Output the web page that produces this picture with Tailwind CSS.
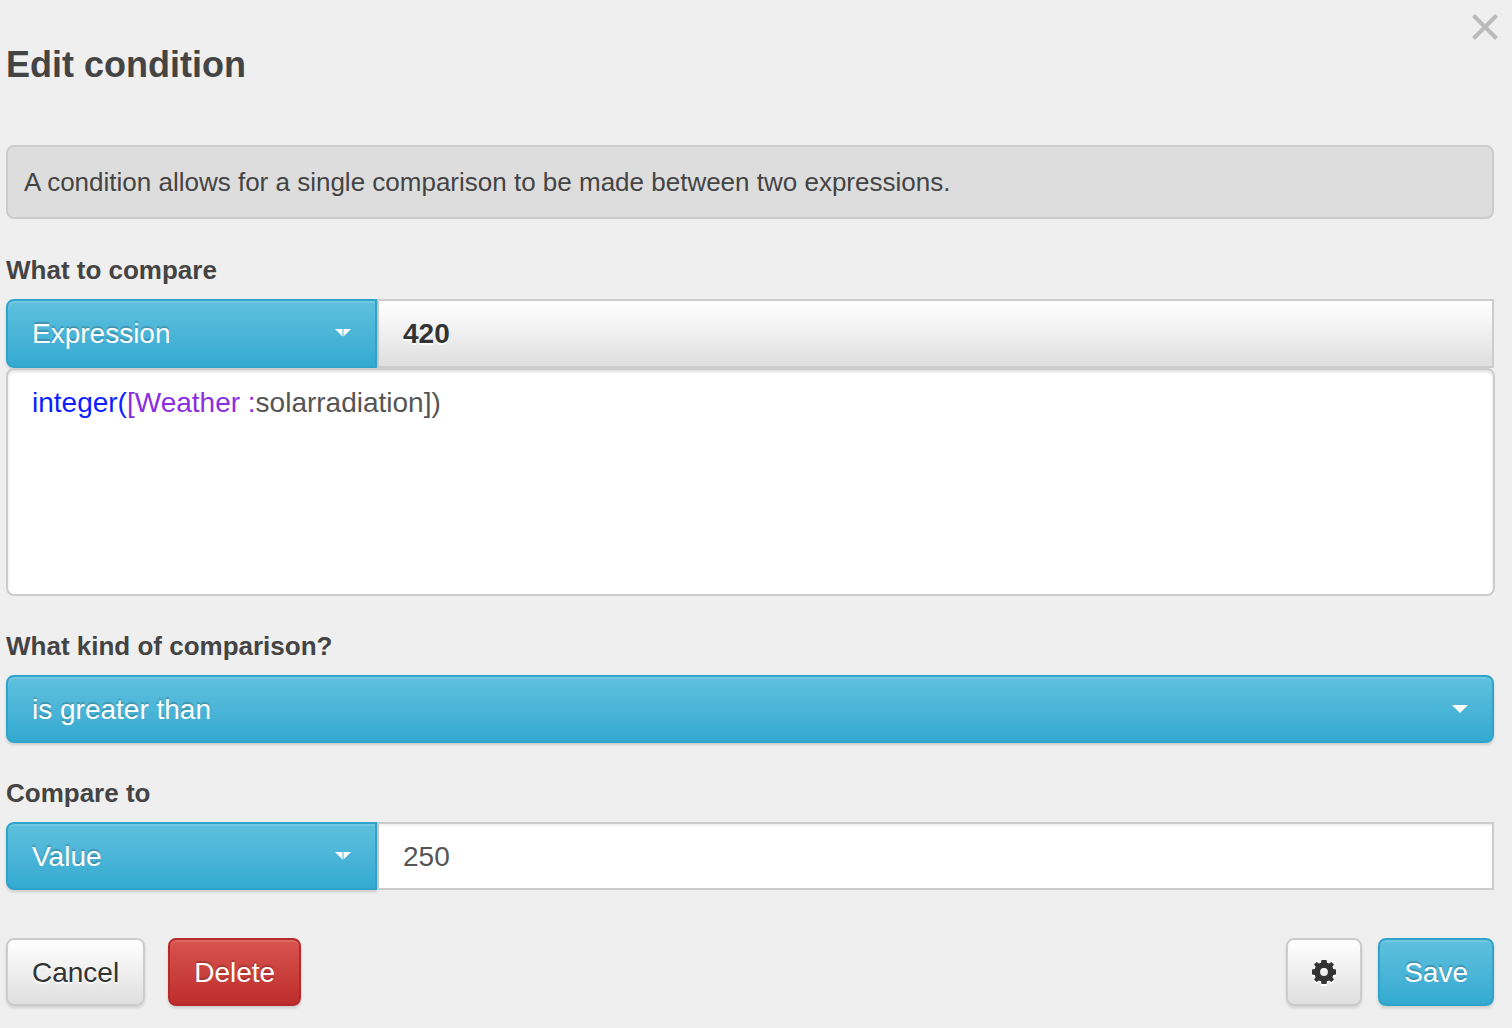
<!DOCTYPE html>
<html lang="en">
<head>
<meta charset="utf-8">
<meta name="viewport" content="width=device-width, initial-scale=1">
<title>Edit condition</title>
<script src="https://cdn.jsdelivr.net/npm/@tailwindcss/browser@4"></script>
</head>
<body class="min-h-screen bg-[#efefef] font-['Liberation_Sans',Arial,sans-serif] text-[#444]">
<main class="relative pt-[41px] pr-[18px] pb-[22px] pl-[6px]">
  <button type="button" aria-label="Close" class="absolute top-[13px] right-[13px] size-7 text-[#bbb]">
    <svg viewBox="0 0 28 28" class="size-7" fill="none" stroke="currentColor" stroke-width="4"><path d="M2.500 2.500 25.500 25.500M25.500 2.500 2.500 25.500"/></svg>
  </button>
  <h1 class="mb-14 text-[36px] leading-12 font-bold">Edit condition</h1>
  <p class="mb-[35px] rounded-lg border-2 border-[#ccc] bg-[#ddd] px-4 py-[19px] text-[26px] leading-8">A condition allows for a single comparison to be made between two expressions.</p>

  <form>
    <label for="left-type" class="mb-[13px] block text-[26px] leading-8 font-bold">What to compare</label>
    <div class="flex h-[69px]">
      <div class="relative w-[371px] shrink-0">
        <select id="left-type" class="h-full w-full appearance-none rounded-l-lg border-2 border-[#2fa4ca] bg-linear-to-b from-[#5fc0de] to-[#33aad1] px-6 text-[28px] text-white shadow-[inset_0_2px_0_rgba(255,255,255,0.12),0_2px_3px_rgba(0,0,0,0.15)] [text-shadow:0_-2px_1px_rgba(0,0,0,0.2)]">
          <option>Expression</option>
          <option>Value</option>
        </select>
        <svg viewBox="0 0 16 8" class="pointer-events-none absolute top-[30px] right-[26px] h-2 w-4" aria-hidden="true"><path d="M0 0H7.500V7.500ZM8.500 0H16L8.500 7.500Z" fill="#fff"/></svg>
      </div>
      <output for="expression" class="flex flex-1 items-center border-2 border-[#ccc] bg-linear-to-b from-white to-[#dfdfdf] px-6 text-[28px] font-bold text-[#333] [text-shadow:0_2px_1px_rgba(255,255,255,0.9)]">420</output>
    </div>
    <div class="relative -mr-px h-[228px] rounded-lg border-2 border-[#ccc] bg-white text-[28px] leading-10 shadow-[inset_0_2px_3px_rgba(0,0,0,0.12)]">
      <pre aria-hidden="true" class="px-6 py-[13px] font-['Liberation_Sans',Arial,sans-serif] whitespace-pre-wrap text-[#555]"><span class="text-[#0a1eff]">integer(</span><span class="text-[#8a2fe0]">[Weather :</span>solarradiation])</pre>
      <textarea id="expression" aria-label="Expression" spellcheck="false" class="absolute inset-0 resize-none overflow-hidden bg-transparent px-6 py-[13px] text-transparent caret-[#555]">integer([Weather :solarradiation])</textarea>
    </div>

    <label for="operator" class="mt-[34px] mb-[13px] block text-[26px] leading-8 font-bold">What kind of comparison?</label>
    <div class="relative h-[68px]">
      <select id="operator" class="h-full w-full appearance-none rounded-lg border-2 border-[#2fa4ca] bg-linear-to-b from-[#5fc0de] to-[#33aad1] px-6 pt-0.5 text-[28px] text-white shadow-[inset_0_2px_0_rgba(255,255,255,0.12),0_2px_3px_rgba(0,0,0,0.15)] [text-shadow:0_-2px_1px_rgba(0,0,0,0.2)]">
        <option>is greater than</option>
        <option>is less than</option>
      </select>
      <svg viewBox="0 0 16 8" class="pointer-events-none absolute top-[30px] right-[26px] h-2 w-4" aria-hidden="true"><path d="M0 0H16L8 8Z" fill="#fff"/><path d="M8 0V8" stroke="#bfe4f1" stroke-width=".6"/></svg>
    </div>

    <label for="right-type" class="mt-[34px] mb-[13px] block text-[26px] leading-8 font-bold">Compare to</label>
    <div class="flex h-[68px]">
      <div class="relative w-[371px] shrink-0">
        <select id="right-type" class="h-full w-full appearance-none rounded-l-lg border-2 border-[#2fa4ca] bg-linear-to-b from-[#5fc0de] to-[#33aad1] px-6 pt-0.5 text-[28px] text-white shadow-[inset_0_2px_0_rgba(255,255,255,0.12),0_2px_3px_rgba(0,0,0,0.15)] [text-shadow:0_-2px_1px_rgba(0,0,0,0.2)]">
          <option>Value</option>
          <option>Expression</option>
        </select>
        <svg viewBox="0 0 16 8" class="pointer-events-none absolute top-[30px] right-[26px] h-2 w-4" aria-hidden="true"><path d="M0 0H7.500V7.500ZM8.500 0H16L8.500 7.500Z" fill="#fff"/></svg>
      </div>
      <input type="text" aria-label="Value to compare to" value="250" class="min-w-0 flex-1 border-2 border-[#ccc] bg-white px-6 pt-0.5 text-[28px] text-[#555] shadow-[inset_0_2px_2px_rgba(0,0,0,0.06)]">
    </div>

    <div class="mt-12 flex h-[68px] items-stretch">
      <button type="button" class="mr-[23px] rounded-lg border-2 border-[#ccc] bg-linear-to-b from-white to-[#dfdfdf] px-6 pt-0.5 text-[28px] text-[#333] shadow-[0_2px_3px_rgba(0,0,0,0.12)] [text-shadow:0_2px_1px_rgba(255,255,255,0.9)]">Cancel</button>
      <button type="button" class="rounded-lg border-2 border-[#b52b2b] bg-linear-to-b from-[#d9534f] to-[#bd2c2c] px-6 pt-0.5 text-[28px] text-white shadow-[inset_0_2px_0_rgba(255,255,255,0.12),0_2px_3px_rgba(0,0,0,0.15)] [text-shadow:0_-2px_1px_rgba(0,0,0,0.2)]">Delete</button>
      <button type="button" aria-label="Settings" class="mr-4 ml-auto flex w-[76px] items-center justify-center rounded-lg border-2 border-[#ccc] bg-linear-to-b from-white to-[#dfdfdf] text-[#333] shadow-[0_2px_3px_rgba(0,0,0,0.12)]">
        <svg viewBox="-12 -12 24 24" class="size-6 drop-shadow-[0_2px_0_#fff]" fill="currentColor"><path fill-rule="evenodd" d="M-2.500-12H2.500L3-9.300 5.200-8.400 7.400-10 10-7.400 8.400-5.200 9.300-3 12-2.500V2.500L9.300 3 8.400 5.200 10 7.400 7.400 10 5.200 8.400 3 9.300 2.500 12H-2.500L-3 9.300-5.200 8.400-7.400 10-10 7.400-8.400 5.200-9.300 3-12 2.500V-2.500L-9.300-3-8.400-5.200-10-7.400-7.400-10-5.200-8.400-3-9.300ZM0-3.900A3.900 3.900 0 1 0 0 3.900 3.900 3.900 0 1 0 0-3.900Z"/></svg>
      </button>
      <button type="submit" class="rounded-lg border-2 border-[#2fa4ca] bg-linear-to-b from-[#5fc0de] to-[#33aad1] px-6 pt-0.5 text-[28px] text-white shadow-[inset_0_2px_0_rgba(255,255,255,0.12),0_2px_3px_rgba(0,0,0,0.15)] [text-shadow:0_-2px_1px_rgba(0,0,0,0.2)]">Save</button>
    </div>
  </form>
</main>
</body>
</html>
